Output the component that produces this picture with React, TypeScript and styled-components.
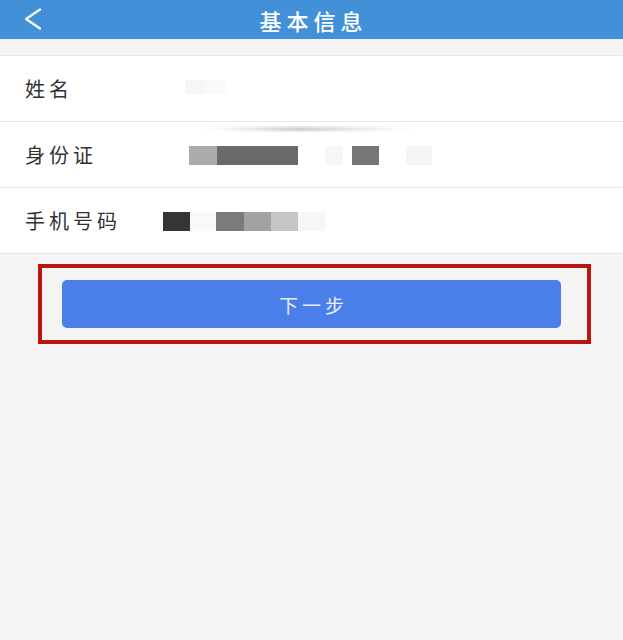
import React from 'react'
import styled, {createGlobalStyle} from 'styled-components'

const GlobalStyle = createGlobalStyle`
	html, body {
		margin: 0;
		padding: 0;
		background: #f4f4f4;
	}
	body {
		font-family: "Noto Sans CJK SC", "Noto Sans", sans-serif;
	}
`

type Block = {w: number, c: string}

type Field = {
	label: string,
	offset: number,
	blocks: Block[],
	faint?: boolean
}

const fields: Field[] = [
	{label: '姓名', offset: 185, blocks: [{w: 20, c: '#f6f6f6'}, {w: 22, c: '#fafafa'}], faint: true},
	{label: '身份证', offset: 189, blocks: [
		{w: 28, c: '#ababab'}, {w: 81, c: '#6a6a6a'}, {w: 27, c: '#ffffff'}, {w: 18, c: '#f7f7f7'},
		{w: 9, c: '#ffffff'}, {w: 27, c: '#767676'}, {w: 27, c: '#ffffff'}, {w: 26, c: '#f5f5f5'}
	]},
	{label: '手机号码', offset: 163, blocks: [
		{w: 27, c: '#353535'}, {w: 26, c: '#f9f9f9'}, {w: 28, c: '#7b7b7b'}, {w: 27, c: '#a2a2a2'},
		{w: 27, c: '#c6c6c6'}, {w: 27, c: '#f6f6f6'}
	]},
]

export default function App() {
	return (
		<Page>
			<GlobalStyle />
			<Header>
				<Back>
					<svg width="20" height="22" viewBox="0 0 20 22">
						<path d="M17 1.5 L3 11 L17 20.5" fill="none" stroke="#fff" strokeWidth="2.2" strokeLinecap="round" strokeLinejoin="round" />
					</svg>
				</Back>
				<Title>基本信息</Title>
			</Header>
			<Form>
				{fields.map((f, i) => (
					<Row key={f.label} first={i === 0}>
						<Label>{f.label}</Label>
						<Mosaic offset={f.offset} faint={f.faint}>
							{f.blocks.map((b, j) => (
								<Cell key={j} w={b.w} c={b.c} />
							))}
						</Mosaic>
						{i === 0 && <Smear />}
					</Row>
				))}
			</Form>
			<Highlight>
				<NextButton>下一步</NextButton>
			</Highlight>
		</Page>
	)
}

const Page = styled.div`
	width: 623px;
	min-height: 640px;
	background: #f4f4f4;
`
const Header = styled.header`
	position: relative;
	height: 39px;
	background: #4290d7;
	display: flex;
	align-items: center;
	justify-content: center;
`
const Back = styled.div`
	position: absolute;
	left: 23px;
	top: 8px;
	display: flex;
`
const Title = styled.h1`
	margin: 0;
	color: #fff;
	font-size: 22px;
	font-weight: 500;
	letter-spacing: 5px;
	padding-left: 4px;
`
const Form = styled.div`
	margin-top: 16px;
	background: #fff;
	border-top: 1px solid #e6e6e6;
	border-bottom: 1px solid #e6e6e6;
`
const Row = styled.div<{first?: boolean}>`
	position: relative;
	height: 65px;
	display: flex;
	align-items: center;
	border-top: ${p => p.first ? 'none' : '1px solid #e8e8e8'};
`
const Label = styled.span`
	position: absolute;
	left: 25px;
	font-size: 20px;
	color: #333;
	letter-spacing: 4px;
`
const Mosaic = styled.div<{offset: number, faint?: boolean}>`
	display: flex;
	margin-left: ${p => p.offset}px;
	height: ${p => p.faint ? 14 : 19}px;
	margin-top: ${p => p.faint ? -4 : 2}px;
	filter: blur(0.6px);
`
const Cell = styled.div<{w: number, c: string}>`
	width: ${p => p.w}px;
	height: 100%;
	background: ${p => p.c};
`
const Smear = styled.div`
	position: absolute;
	left: 200px;
	bottom: -10px;
	width: 215px;
	height: 4px;
	border-radius: 50%;
	background: linear-gradient(90deg, rgba(200,200,200,0), rgba(190,190,190,0.8) 45%, rgba(200,200,200,0));
	filter: blur(1px);
`
const Highlight = styled.div`
	margin: 10px 32px 0 38px;
	height: 72px;
	border: 4px solid #b8160f;
	display: flex;
	align-items: center;
	padding: 0 26px 0 20px;
`
const NextButton = styled.button`
	flex: 1;
	height: 48px;
	border: none;
	border-radius: 5px;
	background: #4a7ee8;
	color: #e8eefc;
	font-family: "Noto Sans CJK SC", "Noto Sans", sans-serif;
	font-size: 19px;
	letter-spacing: 4px;
	padding: 0 0 0 4px;
`
